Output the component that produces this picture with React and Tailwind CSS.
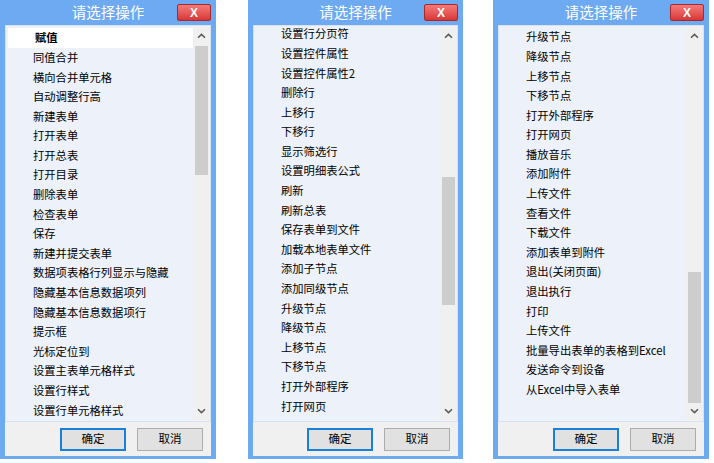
import React from "react";

const FONT = { fontFamily: '"Noto Sans CJK SC", "Noto Sans", sans-serif' };

const p1 = ["赋值","同值合并","横向合并单元格","自动调整行高","新建表单","打开表单","打开总表","打开目录","删除表单","检查表单","保存","新建并提交表单","数据项表格行列显示与隐藏","隐藏基本信息数据项列","隐藏基本信息数据项行","提示框","光标定位到","设置主表单元格样式","设置行样式","设置行单元格样式"];
const p2 = ["设置行分页符","设置控件属性","设置控件属性2","删除行","上移行","下移行","显示筛选行","设置明细表公式","刷新","刷新总表","保存表单到文件","加载本地表单文件","添加子节点","添加同级节点","升级节点","降级节点","上移节点","下移节点","打开外部程序","打开网页"];
const p3 = ["升级节点","降级节点","上移节点","下移节点","打开外部程序","打开网页","播放音乐","添加附件","上传文件","查看文件","下载文件","添加表单到附件","退出(关闭页面)","退出执行","打印","上传文件","批量导出表单的表格到Excel","发送命令到设备","从Excel中导入表单"];

function Chevron({ down }) {
  return (
    <svg width="9" height="6" viewBox="0 0 9 6">
      <path
        d={down ? "M1 1.2 L4.5 4.6 L8 1.2" : "M1 4.8 L4.5 1.4 L8 4.8"}
        fill="none"
        stroke="#5a5a5a"
        strokeWidth="1.6"
      />
    </svg>
  );
}

function Panel({ items, width, offset, thumbTop, thumbH, selectedFirst }) {
  return (
    <div
      className="flex flex-col bg-[#6eaaf2] px-[5px] pb-[3px]"
      style={{ width, height: 459 }}
    >
      <div className="relative h-[25px] shrink-0 flex items-center justify-center">
        <span className="text-white text-[14.5px] leading-none" style={FONT}>
          请选择操作
        </span>
        <div className="absolute right-0 top-[4px] w-[34px] h-[17px] rounded-[2px] border border-[#a52b2b] bg-gradient-to-b from-[#f37a7a] to-[#d93535] flex items-center justify-center">
          <span className="text-white font-bold text-[12px] leading-none" style={{ fontFamily: '"Liberation Sans", Arial, sans-serif' }}>
            X
          </span>
        </div>
      </div>
      <div className="flex-1 flex flex-col bg-[#f0f0f0]">
        <div className="h-[397px] shrink-0 flex border border-[#d8e2f0] bg-[#ecf1fa] overflow-hidden">
          <div className="flex-1 overflow-hidden" style={{ paddingTop: offset > 0 ? offset : 0, marginTop: offset < 0 ? offset : 0 }}>
            {items.map((t, i) => (
              <div
                key={i}
                className={
                  "h-[19.6px] flex items-center pl-[27px] text-[11.3px] text-black whitespace-nowrap " +
                  (selectedFirst && i === 0 ? "bg-white font-bold ml-[2px] pl-[25px]" : "")
                }
                style={FONT}
              >
                {t}
              </div>
            ))}
          </div>
          <div className="w-[17px] shrink-0 bg-[#f0f0f0] relative">
            <div className="h-[20px] flex items-center justify-center">
              <Chevron />
            </div>
            <div
              className="absolute left-[2px] w-[13px] bg-[#cdcdcd]"
              style={{ top: thumbTop, height: thumbH }}
            />
            <div className="absolute bottom-0 left-0 w-[17px] h-[20px] flex items-center justify-center">
              <Chevron down />
            </div>
          </div>
        </div>
        <div className="flex-1 flex items-center justify-end gap-[11px] pr-[8px]">
          <div
            className="w-[66px] h-[23px] border-2 border-[#1a7fd8] bg-[#e1e1e1] flex items-center justify-center text-[11.5px] text-black"
            style={FONT}
          >
            确定
          </div>
          <div
            className="w-[66px] h-[23px] border border-[#adadad] bg-[#e1e1e1] flex items-center justify-center text-[11.5px] text-black"
            style={FONT}
          >
            取消
          </div>
        </div>
      </div>
    </div>
  );
}

export default function App() {
  return (
    <div className="w-[714px] h-[463px] bg-white flex items-start">
      <Panel items={p1} width={216} offset={2} thumbTop={20} thumbH={129} selectedFirst />
      <div className="ml-[32px]">
        <Panel items={p2} width={215} offset={-2} thumbTop={151} thumbH={128} />
      </div>
      <div className="ml-[30px]">
        <Panel items={p3} width={216} offset={1} thumbTop={246} thumbH={131} />
      </div>
    </div>
  );
}
